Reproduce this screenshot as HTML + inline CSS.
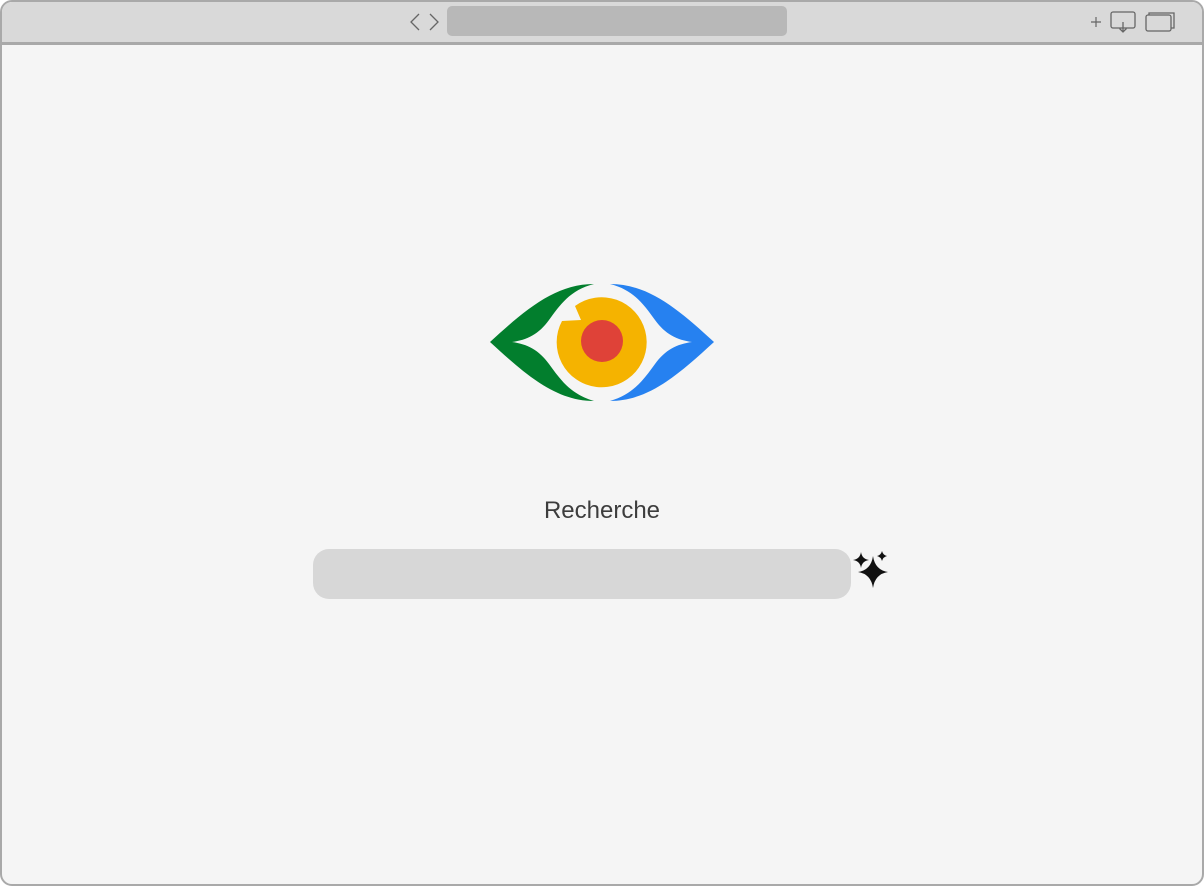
<!DOCTYPE html>
<html><head><meta charset="utf-8"><style>
html,body{margin:0;padding:0;width:1204px;height:886px;overflow:hidden;background:#fff;}
.win{position:absolute;left:0;top:0;width:1200px;height:882px;border:2px solid #a9a9a9;border-radius:12px;background:#f5f5f5;overflow:hidden;}
.bar{position:absolute;left:0;top:0;width:1200px;height:40px;background:#d9d9d9;border-bottom:3px solid #a9a9a9;}
.url{position:absolute;left:445px;top:4px;width:340px;height:30px;background:#b8b8b8;border-radius:5px;}
.lbl{position:absolute;left:0;width:1204px;top:497px;text-align:center;font:24px "Liberation Sans",sans-serif;color:#3d3d3d;}
.search{position:absolute;left:313px;top:549px;width:538px;height:50px;background:#d7d7d7;border-radius:16px;}
</style></head><body>
<div class="win">
<div class="bar">
<svg style="position:absolute;left:405px;top:9px" width="34" height="24" viewBox="0 0 34 24"><path d="M12 3 L4 11 L12 19" fill="none" stroke="#666" stroke-width="1.3"/><path d="M23 3 L31 11 L23 19" fill="none" stroke="#666" stroke-width="1.3"/></svg>
<div class="url"></div>
<svg style="position:absolute;left:1085px;top:8px" width="100" height="26" viewBox="0 0 100 26"><path d="M4 12 H14 M9 7 V17" stroke="#666" stroke-width="1.2"/><rect x="24" y="2" width="24" height="16" rx="2" fill="none" stroke="#666" stroke-width="1.3"/><path d="M36 12 V22 M32.5 18.5 L36 22 L39.5 18.5" fill="none" stroke="#666" stroke-width="1.3"/><rect x="59" y="5" width="25" height="16" rx="2" fill="none" stroke="#666" stroke-width="1.3"/><path d="M62 5 V3 H87 V18 H84" fill="none" stroke="#666" stroke-width="1.3"/></svg>
</div>
</div>
<svg style="position:absolute;left:0;top:0" width="1204" height="886" viewBox="0 0 1204 886">
<path d="M490 342 C525 310 555 284 594 284 C570 290 560 305 549 320 C539 334 527 340 512 342 C527 344 539 350 549 364 C560 379 570 394 594 401 C555 401 525 374 490 342 Z" fill="#027e2d"/>
<path d="M714 342 C679 310 649 284 610 284 C634 290 644 305 655 320 C665 334 677 340 692 342 C677 344 665 350 655 364 C644 379 634 394 610 401 C649 401 679 374 714 342 Z" fill="#2681f0"/>
<path d="M575 306 A45 45 0 1 1 562 321 L581 320 Z" fill="#f5b300"/>
<circle cx="602" cy="341" r="21" fill="#df4238"/>
<path d="M873 556 Q875 570 888 572 Q875 574 873 588 Q871 574 858 572 Q871 570 873 556 Z" fill="#111"/>
<path d="M861 552 Q862 559 869 560 Q862 561 861 568 Q860 561 853 560 Q860 559 861 552 Z" fill="#111"/>
<path d="M882 551 Q883 555 887 556 Q883 557 882 561 Q881 557 877 556 Q881 555 882 551 Z" fill="#111"/>
</svg>
<div class="lbl">Recherche</div>
<div class="search"></div>
</body></html>
